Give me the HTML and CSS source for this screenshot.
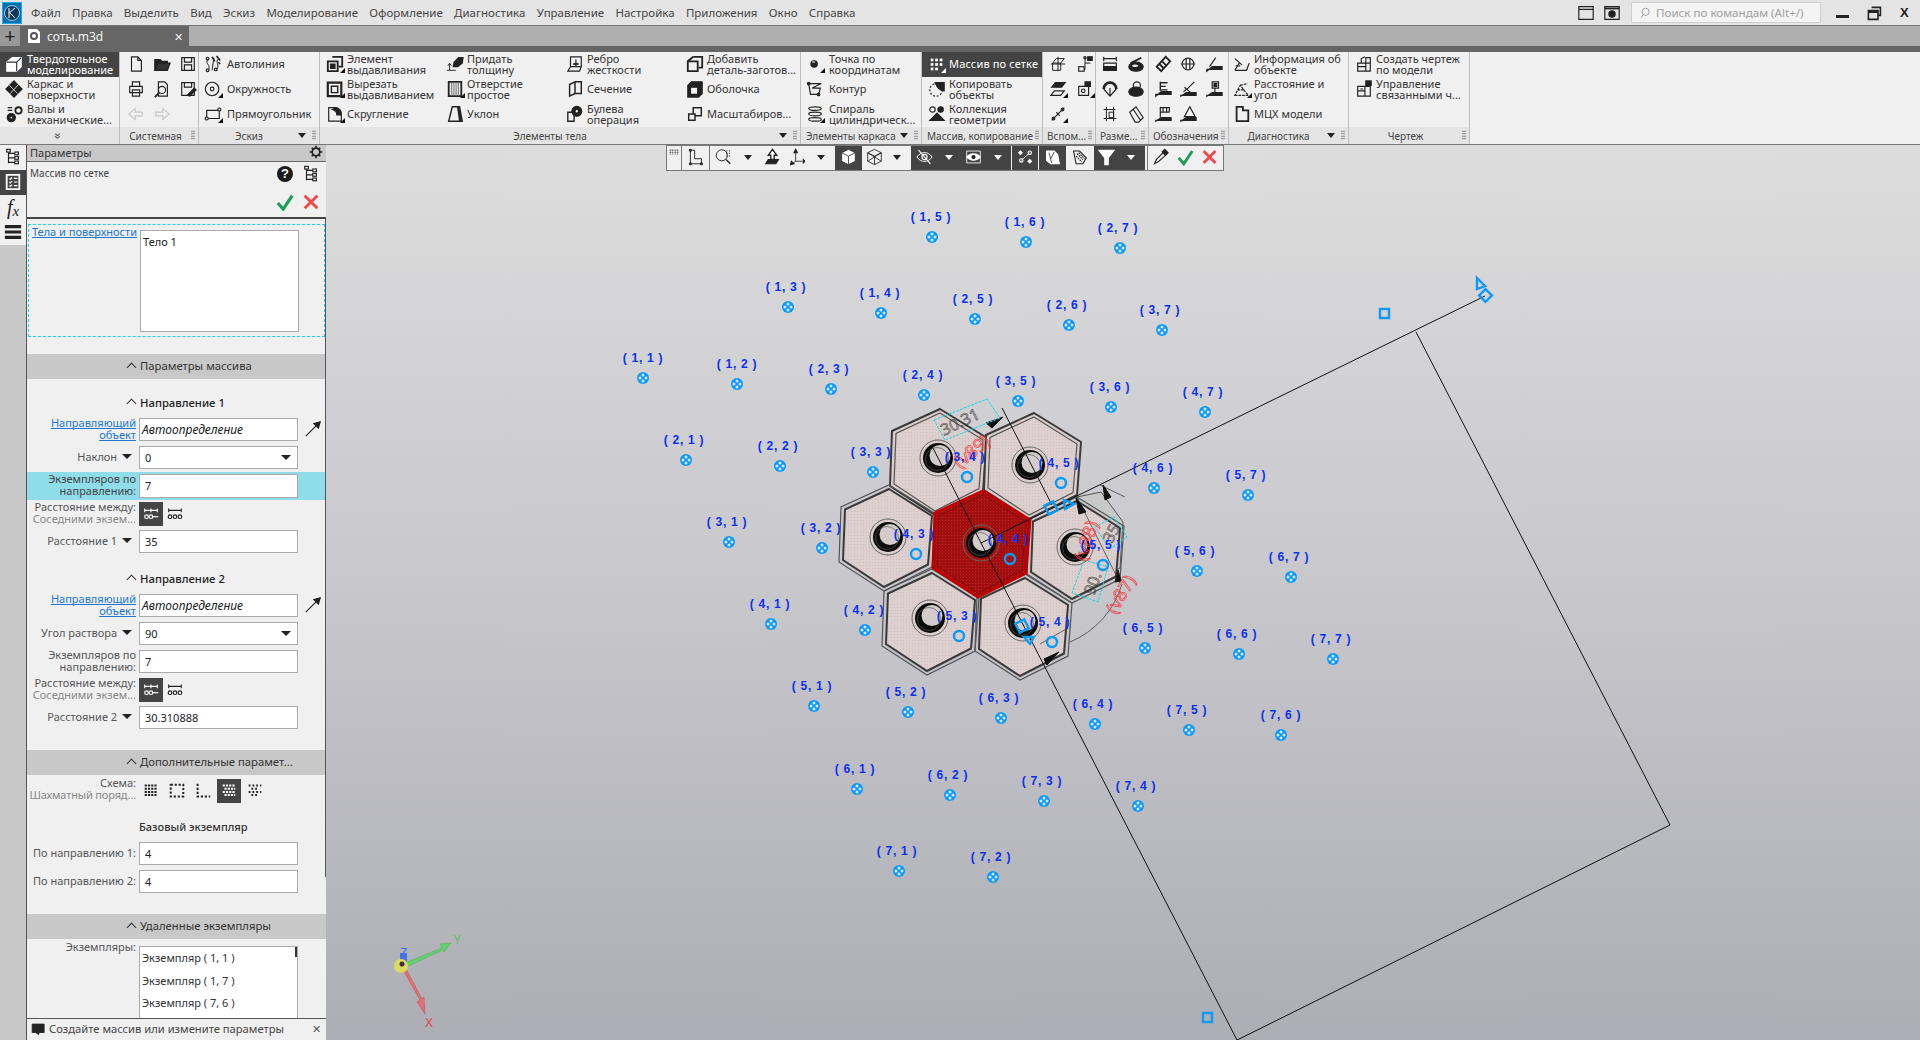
FILE: index.html
```html
<!DOCTYPE html>
<html lang="ru">
<head>
<meta charset="utf-8">
<title>соты.m3d</title>
<link rel="stylesheet" href="styles.css">
</head>
<body>
<svg class="defs" aria-hidden="true">
  <symbol id="i-solid" viewBox="0 0 20 20"><path d="M2 8 8 3h10v10l-5 5H2z" fill="#fff" stroke="#fff"/><path d="M2 8h11v10M13 8l5-5" stroke="#333"/></symbol>
  <symbol id="i-frame" viewBox="0 0 20 20"><path d="M10 1 19 10 10 19 1 10z" fill="#222"/><path d="M5 6l9 9M15 5l-9 10" stroke="#ddd" stroke-width="1"/></symbol>
  <symbol id="i-gears" viewBox="0 0 20 20"><circle cx="7" cy="14" r="4.5" fill="#222"/><circle cx="7" cy="14" r="1.6" fill="#fff"/><circle cx="15" cy="6" r="3.5" fill="none" stroke="#222" stroke-width="2"/><path d="M3 3h5M3 6h5" stroke="#222"/></symbol>
  <symbol id="i-doc" viewBox="0 0 20 20"><path d="M5 2h7l4 4v12H5zM12 2v4h4"/></symbol>
  <symbol id="i-folder" viewBox="0 0 20 20"><path d="M2 5h6l2 2h6v2H6l-4 8z" fill="#222"/><path d="M6 9h13l-3 8H2z" fill="#333"/></symbol>
  <symbol id="i-save" viewBox="0 0 20 20"><path d="M3 3h14v14H3zM6 3v5h8V3M6 17v-6h8v6"/></symbol>
  <symbol id="i-print" viewBox="0 0 20 20"><path d="M6 2h8v5H6zM3 7h14v7H3zM6 11h8v7H6z"/></symbol>
  <symbol id="i-prev" viewBox="0 0 20 20"><path d="M6 2h7l3 3v13H6z"/><circle cx="10" cy="11" r="4"/><path d="M7 14l-5 5" stroke-width="2"/></symbol>
  <symbol id="i-saveas" viewBox="0 0 20 20"><path d="M3 3h14v14H3zM6 3v5h8V3"/><path d="M9 17l8-8 2 2-7 7z" fill="#222"/></symbol>
  <symbol id="i-undo" viewBox="0 0 20 20"><path d="M9 4 2 10l7 6v-4h8V8H9z" stroke="#c8c8c8"/></symbol>
  <symbol id="i-redo" viewBox="0 0 20 20"><path d="M11 4l7 6-7 6v-4H3V8h8z" stroke="#c8c8c8"/></symbol>
  <symbol id="i-auto" viewBox="0 0 20 20"><path d="M4 5c-3 5 4 6 1 12M11 3l-2 14M16 4c-4 4 2 7-2 12" stroke-width="1.100"/><circle cx="4" cy="17" r="1.500"/><circle cx="13" cy="16" r="1.500"/><circle cx="4" cy="4" r="1.500"/><path d="M9 2l3 5M14 1l4 5M16 8l2 2" stroke-width="1.800"/></symbol>
  <symbol id="i-circ" viewBox="0 0 20 20"><circle cx="9" cy="10" r="7.5"/><circle cx="9" cy="10" r="2"/></symbol>
  <symbol id="i-rect" viewBox="0 0 20 20"><path d="M3 6h14v9H3z"/><circle cx="17" cy="5" r="1.7" fill="#f0f0f0"/><circle cx="3" cy="15" r="1.7" fill="#f0f0f0"/></symbol>
  <symbol id="i-ext" viewBox="0 0 20 20"><path d="M7 2h11v11h-4" stroke-width="2"/><path d="M2 7h11v11H2z" stroke-width="2"/><path d="M5 10h5v5H5z" fill="#222"/></symbol>
  <symbol id="i-cut" viewBox="0 0 20 20"><path d="M2 3h15v15H2z" stroke-width="2.4"/><path d="M6 7h7v7H6z" stroke-width="1.6"/></symbol>
  <symbol id="i-fil" viewBox="0 0 20 20"><path d="M3 18V3h7c5 0 7 4 7 8v7z"/><path d="M11 3c5 1 6 4 6 8l-5 0c0-3-1-5-5-6z" fill="#222"/></symbol>
  <symbol id="i-thick" viewBox="0 0 20 20"><path d="M9 8l5-5h5l-1 6-5 4H8z" fill="#222"/><path d="M4 17V10M2 12l2-3 2 3M1 17h10" stroke-width="1"/></symbol>
  <symbol id="i-hole" viewBox="0 0 20 20"><path d="M3 2h14v16H3z" stroke-width="2"/><path d="M6 3v14M8 3v14M10 3v14M12 3v14M14 3v14" stroke="#777" stroke-width="1"/></symbol>
  <symbol id="i-draft" viewBox="0 0 20 20"><path d="M7 2h8l3 16H3z" stroke-width="1.6"/><path d="M14 3l3 14h-2l-2-14z" fill="#222"/></symbol>
  <symbol id="i-rib" viewBox="0 0 20 20"><path d="M5 2h12v11H5zM5 13l-3 5h13l2-5M11 5v8"/><path d="M8 10h6" stroke-width="2"/></symbol>
  <symbol id="i-sect" viewBox="0 0 20 20"><path d="M4 5l6-3v13l-6 3zM10 2h7v13h-7" stroke-width="1.6"/></symbol>
  <symbol id="i-bool" viewBox="0 0 20 20"><path d="M2 8h7v10H2z" stroke-width="1.5"/><circle cx="12" cy="7" r="5.5" fill="#222"/><circle cx="12" cy="7" r="2" fill="#f0f0f0"/></symbol>
  <symbol id="i-add" viewBox="0 0 20 20"><path d="M8 2h10v12h-4" stroke-width="2"/><path d="M2 7h11v11H2z" stroke-width="2" fill="#f0f0f0"/><path d="M2 7l6-5" stroke-width="2"/></symbol>
  <symbol id="i-shell" viewBox="0 0 20 20"><path d="M2 6l4-4h12v13l-4 4H2z" fill="#222"/><path d="M5 8h8v8H5z" fill="#f0f0f0"/></symbol>
  <symbol id="i-scale" viewBox="0 0 20 20"><path d="M8 3h9v9H8z" stroke-width="1.6"/><path d="M3 10h7v7H3z" stroke-width="1.6" fill="#f0f0f0"/></symbol>
  <symbol id="i-pt" viewBox="0 0 20 20"><circle cx="9" cy="10" r="3.5" fill="#222"/><path d="M7 8a3 3 0 0 1 3 0" stroke="#f0f0f0"/></symbol>
  <symbol id="i-cont" viewBox="0 0 20 20"><path d="M3 4h14l-10 5h9l-2 7H5z"/><circle cx="3" cy="4" r="1.4"/><circle cx="14" cy="16" r="1.4"/></symbol>
  <symbol id="i-spir" viewBox="0 0 20 20"><ellipse cx="10" cy="4" rx="7" ry="2"/><ellipse cx="10" cy="10" rx="7" ry="2"/><ellipse cx="10" cy="16" rx="7" ry="2"/></symbol>
  <symbol id="i-grid" viewBox="0 0 20 20"><g fill="#fff" stroke="none"><rect x="3" y="4" width="3" height="3"/><rect x="8" y="4" width="3" height="3"/><rect x="13" y="4" width="3" height="3"/><rect x="3" y="9" width="3" height="3"/><rect x="8" y="9" width="3" height="3"/><rect x="13" y="9" width="3" height="3"/><rect x="3" y="14" width="3" height="3"/><rect x="8" y="14" width="3" height="3"/></g></symbol>
  <symbol id="i-copy" viewBox="0 0 20 20"><circle cx="9" cy="11" r="7" stroke-dasharray="2 2"/><path d="M8 3h10v9c-4 0-8-4-10-9z" fill="#222"/></symbol>
  <symbol id="i-coll" viewBox="0 0 20 20"><circle cx="5" cy="5" r="3"/><circle cx="14" cy="5" r="3" fill="#222"/><path d="M2 17l8-8 8 8z" fill="#222"/></symbol>
  <symbol id="i-a1" viewBox="0 0 20 20"><path d="M4 9h9l4-5M13 9v8H4V9l4-5h9M10 2v16M2 10h16" stroke-width="1.100"/></symbol>
  <symbol id="i-a2" viewBox="0 0 20 20"><path d="M10 2v14M10 9h6M3 16h7" stroke-width="1.100"/><rect x="13" y="2" width="5" height="4" fill="#222"/><rect x="3" y="13" width="6" height="5" fill="#f0f0f0"/><circle cx="10" cy="3" r="1.3"/></symbol>
  <symbol id="i-a3" viewBox="0 0 20 20"><path d="M7 3h11l-4 5H3z" fill="#222"/><path d="M6 12h11l-4 5H2z"/></symbol>
  <symbol id="i-a4" viewBox="0 0 20 20"><path d="M3 7h11v10H3z"/><circle cx="8" cy="12" r="2"/><path d="M10 2h6v5h-6z" fill="#222"/></symbol>
  <symbol id="i-a5" viewBox="0 0 20 20"><path d="M3 17 17 3M8 8l4 4"/><circle cx="5" cy="15" r="1.5"/><circle cx="15" cy="5" r="1.5"/></symbol>
  <symbol id="i-d1" viewBox="0 0 20 20"><path d="M3 4h14M3 2v5M17 2v5M3 9h14v8H3z"/><path d="M3 13h14v4H3z" fill="#222"/></symbol>
  <symbol id="i-d2" viewBox="0 0 20 20"><ellipse cx="10" cy="13" rx="8" ry="5" fill="#222"/><ellipse cx="9" cy="12" rx="4" ry="2" fill="#f0f0f0"/><path d="M4 9 16 3" stroke-width="2"/></symbol>
  <symbol id="i-d3" viewBox="0 0 20 20"><path d="M3 10a7 7 0 0 1 14 0" stroke-width="3"/><path d="M3 10l7 8 7-8M10 9v9"/></symbol>
  <symbol id="i-d4" viewBox="0 0 20 20"><ellipse cx="10" cy="13" rx="8" ry="5" fill="#222"/><circle cx="11" cy="6" r="4"/></symbol>
  <symbol id="i-d5" viewBox="0 0 20 20"><path d="M3 5h13M6 2v16M14 2v16M3 15h14M9 8h5v6H9z" stroke-width="1.100"/></symbol>
  <symbol id="i-d6" viewBox="0 0 20 20"><path d="M3 8 10 2l8 12-5 5H9zM7 5l8 12" stroke-width="1.300"/></symbol>
  <symbol id="i-o1" viewBox="0 0 20 20"><path d="M3 13 13 2l5 5L8 18z" stroke-width="2"/><path d="M6 10l5 5M9 7l5 5" stroke-width="2"/></symbol>
  <symbol id="i-o2" viewBox="0 0 20 20"><circle cx="10" cy="10" r="6.5"/><path d="M2 10h16M8 4v12M12 4v12"/></symbol>
  <symbol id="i-o3" viewBox="0 0 20 20"><path d="M2 18 8 13h11v3H2z" fill="#222"/><path d="M5 13l7-10"/></symbol>
  <symbol id="i-o4" viewBox="0 0 20 20"><path d="M2 18 8 13h11v3H2z" fill="#222"/><path d="M7 12V2M7 3h8M7 7h6M7 11h8" stroke-width="1.500"/></symbol>
  <symbol id="i-o5" viewBox="0 0 20 20"><path d="M2 18 8 14h11v3H2z" fill="#222"/><path d="M5 13l5-4 7-7M6 8l7 6"/></symbol>
  <symbol id="i-o6" viewBox="0 0 20 20"><path d="M2 18 8 14h11v3H2z" fill="#222"/><path d="M8 2h7v7H8zM11 9v5"/><path d="M10 4h3v3h-3z" fill="#222"/></symbol>
  <symbol id="i-o7" viewBox="0 0 20 20"><path d="M2 18 8 14h11v3H2z" fill="#222"/><path d="M7 14V3h10v5M7 8h10M10 3v5M14 3v5" stroke-width="1.300"/></symbol>
  <symbol id="i-o8" viewBox="0 0 20 20"><path d="M2 18 8 14h11v3H2z" fill="#222"/><path d="M12 2l-6 11h12z" stroke-width="1.300"/></symbol>
  <symbol id="i-dg1" viewBox="0 0 20 20"><path d="M2 4l8 7M2 17h13l3-8M2 17 7 9"/><path d="M3 12h5" stroke-dasharray="2 1"/></symbol>
  <symbol id="i-dg2" viewBox="0 0 20 20"><path d="M2 17h15l-9-11-6 11zM8 6l8-2M5 11h8" stroke-dasharray="3 1"/></symbol>
  <symbol id="i-dg3" viewBox="0 0 20 20"><path d="M4 2h7v4h6v12H4z" stroke-width="2"/></symbol>
  <symbol id="i-c1" viewBox="0 0 20 20"><path d="M3 9h14v9H3zM3 13h9M12 9v9M7 9V4l4-2M12 3h5v6h-5z"/></symbol>
  <symbol id="i-c2" viewBox="0 0 20 20"><path d="M3 7h14v11H3zM3 12h8M11 7v11M6 10h3"/><rect x="12" y="1" width="6" height="5" fill="#222"/></symbol>
  <symbol id="i-tree" viewBox="0 0 20 20"><path d="M5 3v14M5 6h7M5 11h7M5 16h7"/><rect x="3" y="1.500" width="4" height="3" fill="#fff"/><rect x="12" y="4.500" width="4" height="3" fill="#fff"/><rect x="12" y="9.500" width="4" height="3" fill="#fff"/><rect x="12" y="14.500" width="4" height="3" fill="#fff"/></symbol>
  <symbol id="i-list" viewBox="0 0 20 20"><path d="M3 2h14v16H3z" stroke-width="2" stroke="#fff"/><path d="M6 6l1 1 2-2M6 10l1 1 2-2M6 14l1 1 2-2M11 6h4M11 10h4M11 14h4" stroke="#fff"/></symbol>
  <symbol id="i-bars" viewBox="0 0 20 20"><path d="M1 4h18M1 10h18M1 16h18" stroke-width="3.400" stroke="#222"/></symbol>
  <symbol id="i-gear" viewBox="0 0 20 20"><circle cx="10" cy="10" r="5.500" stroke-width="2.400"/><path d="M10 1v4M10 15v4M1 10h4M15 10h4M4 4l3 3M13 13l3 3M16 4l-3 3M7 13l-3 3" stroke-width="2.400"/></symbol>
  <symbol id="i-ok" viewBox="0 0 20 20"><path d="M2 11 8 18 18 3" stroke="#1c9c5c" stroke-width="3.400"/></symbol>
  <symbol id="i-no" viewBox="0 0 20 20"><path d="M3 3l14 14M17 3 3 17" stroke="#f04848" stroke-width="3.200"/></symbol>
  <symbol id="i-arr" viewBox="0 0 20 20"><path d="M2 18 17 3"/><path d="M18 2l-2 7-5-5z" fill="#222"/></symbol>
  <symbol id="i-d-a" viewBox="0 0 20 20"><path d="M3 6h14M3 4v4M17 4v4M10 4v4" stroke-width="1.200"/><circle cx="5" cy="13" r="2"/><circle cx="10" cy="13" r="2"/><path d="M12 13h6"/></symbol>
  <symbol id="i-d-b" viewBox="0 0 20 20"><path d="M3 6h14M3 4v4M17 4v4" stroke-width="1.200"/><circle cx="4.500" cy="13" r="2"/><circle cx="10" cy="13" r="2"/><circle cx="15.500" cy="13" r="2"/></symbol>
  <symbol id="i-sc1" viewBox="0 0 20 20"><path d="M3 4h14M3 7.500h14M3 11h14M3 14.500h14" stroke-width="2.200" stroke-dasharray="2.400 1.200"/></symbol>
  <symbol id="i-sc2" viewBox="0 0 20 20"><path d="M3 3h14v13H3z" stroke-width="2.200" stroke-dasharray="2.400 2"/></symbol>
  <symbol id="i-sc3" viewBox="0 0 20 20"><path d="M4 2v14h14" stroke-width="2.200" stroke-dasharray="2.400 2"/></symbol>
  <symbol id="i-sc4" viewBox="0 0 20 20"><path d="M3 4h14M5 7.500h12M3 11h14M5 14.500h12" stroke-width="2.200" stroke-dasharray="2.400 1.200" stroke="#fff"/></symbol>
  <symbol id="i-sc5" viewBox="0 0 20 20"><path d="M3 4h14M6 7.500h8M3 11h14M6 14.500h8" stroke-width="2.200" stroke-dasharray="2 2.200"/></symbol>
  <symbol id="i-tb-l" viewBox="0 0 20 20"><path d="M4 2h5v10h8v6H4z" stroke-width="1.100"/><circle cx="4" cy="2" r="1.200"/><circle cx="4" cy="18" r="1.200"/><circle cx="17" cy="18" r="1.200"/></symbol>
  <symbol id="i-tb-z" viewBox="0 0 20 20"><circle cx="8" cy="8" r="6.500" stroke-width="1.100"/><path d="M13 13l5 5" stroke-width="1.600"/><path d="M14 2v9M17 2v9" stroke-dasharray="1.500 1.500" stroke-width="1"/></symbol>
  <symbol id="i-tb-u" viewBox="0 0 20 20"><path d="M10 1 15 8h-3v5H8V8H5z" fill="#fff" stroke-width="1.600"/><path d="M5 13h12l-3 5H2z" fill="#222"/></symbol>
  <symbol id="i-tb-a" viewBox="0 0 20 20"><path d="M9 4v11H17M9 15l-6 4" stroke-width="1"/><path d="M9 1 7 5h4zM18 13v4l2-2zM3 19l1-4 3 3z" fill="#222"/></symbol>
  <symbol id="i-tb-c" viewBox="0 0 20 20"><path d="M10 1l8 4v10l-8 4-8-4V5z" fill="#fff" stroke="#333" stroke-width="1"/><path d="M2 5l8 4 8-4M10 9v10" stroke="#333" stroke-width="1"/></symbol>
  <symbol id="i-tb-w" viewBox="0 0 20 20"><path d="M10 1l8 4v10l-8 4-8-4V5zM2 5l8 4 8-4M10 9v10M2 15l16-10M18 15 2 5" stroke-width="1"/></symbol>
  <symbol id="i-tb-e1" viewBox="0 0 20 20"><path d="M1 10c5-7 13-7 18 0-5 7-13 7-18 0z" stroke="#fff" stroke-width="1.100"/><circle cx="10" cy="10" r="3" stroke="#fff" stroke-width="1.400"/><path d="M3 2 17 18" stroke="#fff" stroke-width="1.300"/></symbol>
  <symbol id="i-tb-e2" viewBox="0 0 20 20"><path d="M2 3h16v14H2z" stroke="#fff" stroke-width="1"/><path d="M2 10c4-5 12-5 16 0-4 5-12 5-16 0z" fill="#fff" stroke="#fff"/><circle cx="10" cy="10" r="2.500" fill="#222" stroke="none"/></symbol>
  <symbol id="i-tb-n" viewBox="0 0 20 20"><path d="M5 14l10-9" stroke="#fff" stroke-width="1"/><g fill="#fff" stroke="none"><path d="M4 2 7 5 4 8 1 5zM15 12l3 3-3 3-3-3z"/></g><circle cx="5" cy="14" r="2" stroke="#fff"/><circle cx="15" cy="5" r="2" stroke="#fff"/></symbol>
  <symbol id="i-tb-h1" viewBox="0 0 20 20"><path d="M3 3h9l4 4 2 11H8L3 14z" fill="#fff" stroke="#fff"/><path d="M6 5l3 12M12 4l-4 8" stroke="#333" stroke-width="1"/></symbol>
  <symbol id="i-tb-h2" viewBox="0 0 20 20"><path d="M3 3h7l8 8-4 7H6z" stroke-width="1.300"/><path d="M7 6l7 7M9 5l7 7M6 9l7 7" stroke-dasharray="2 1"/></symbol>
  <symbol id="i-tb-f" viewBox="0 0 20 20"><path d="M1 2h18l-7 9v8H8v-8z" fill="#fff" stroke="#fff"/></symbol>
  <symbol id="i-tb-p" viewBox="0 0 20 20"><path d="M3 18 5 13 13 5l3 3-8 7z" stroke-width="1.300"/><path d="M12 4l3-3 4 4-3 3z" fill="#222"/></symbol>
  <symbol id="i-win" viewBox="0 0 20 20"><path d="M2 3h16v14H2zM2 6h16"/></symbol>
  <symbol id="i-wing" viewBox="0 0 20 20"><path d="M2 3h16v14H2z"/><path d="M2 5h16" stroke-width="2"/><circle cx="10" cy="11" r="3.500" fill="#222"/></symbol>
  <symbol id="i-note" viewBox="0 0 20 20"><path d="M1 3h17v12h-7l-1 3-4-3H1z" fill="#222"/></symbol>
</svg>

<header class="menubar">
  <div class="logo"><svg viewBox="0 0 20 22"><rect x="0.500" y="0.500" width="19" height="21" fill="#0c6ea8" stroke="#18a8ee"/><circle cx="10" cy="11" r="7.500" fill="#123a60" stroke="#8fd0f0"/><path d="M7 6v10M7 11l6-5M8 11l5 5" stroke="#fff" fill="none"/></svg></div>
  <nav class="menu">
    <span>Файл</span><span>Правка</span><span>Выделить</span><span>Вид</span><span>Эскиз</span><span>Моделирование</span><span>Оформление</span><span>Диагностика</span><span>Управление</span><span>Настройка</span><span>Приложения</span><span>Окно</span><span>Справка</span>
  </nav>
  <div class="win-tools">
    <svg class="ic wt"><use href="#i-win"/></svg>
    <svg class="ic wt"><use href="#i-wing"/></svg>
    <div class="search"><svg class="ic s-ic" viewBox="0 0 20 20"><circle cx="11" cy="8" r="6"/><path d="M7 13l-4 5"/></svg><span>Поиск по командам (Alt+/)</span></div>
    <div class="wbtns">
      <span class="wmin"></span>
      <svg class="ic wres" viewBox="0 0 20 20"><path d="M7 3h11v10h-3M3 7h12v11H3zM3 7V9h12V7" stroke-width="2"/></svg>
      <span class="wclose">X</span>
    </div>
  </div>
</header>

<div class="tabbar">
  <div class="tab-add">+</div>
  <div class="tab">
    <svg class="tab-ic" viewBox="0 0 16 16"><path d="M2 1h9l3 3v11H2z" fill="#fff"/><circle cx="8" cy="8" r="4" fill="#555"/><circle cx="8" cy="8" r="2" fill="#fff"/></svg>
    <span class="tab-t">соты.m3d</span>
    <span class="tab-x">✕</span>
  </div>
</div>
<div class="strip"></div>

<section class="ribbon">
  <div class="sec s-nav">
    <div class="g3 one">
      <div class="rb act"><svg class="ic"><use href="#i-solid"/></svg><span>Твердотельное<br>моделирование</span></div>
      <div class="rb"><svg class="ic"><use href="#i-frame"/></svg><span>Каркас и<br>поверхности</span></div>
      <div class="rb"><svg class="ic"><use href="#i-gears"/></svg><span>Валы и<br>механические...</span></div>
    </div>
    <div class="foot center"><span class="chev">»</span></div>
  </div>
  <div class="sec s-sys">
    <div class="g3 icons c3">
      <svg class="ic"><use href="#i-doc"/></svg><svg class="ic"><use href="#i-folder"/></svg><svg class="ic"><use href="#i-save"/></svg>
      <svg class="ic"><use href="#i-print"/></svg><svg class="ic"><use href="#i-prev"/></svg><svg class="ic"><use href="#i-saveas"/></svg>
      <svg class="ic"><use href="#i-undo"/></svg><svg class="ic"><use href="#i-redo"/></svg>
    </div>
    <div class="foot"><b>Системная</b><i class="grip"></i></div>
  </div>
  <div class="sec s-sk">
    <div class="g3 one">
      <div class="rb"><svg class="ic"><use href="#i-auto"/></svg><span>Автолиния</span></div>
      <div class="rb cr"><svg class="ic"><use href="#i-circ"/></svg><span>Окружность</span></div>
      <div class="rb cr"><svg class="ic"><use href="#i-rect"/></svg><span>Прямоугольник</span></div>
    </div>
    <div class="foot withdn"><b>Эскиз</b><i class="dn"></i><i class="grip"></i></div>
  </div>
  <div class="sec s-body">
    <div class="g3 body4">
      <div class="rb cr"><svg class="ic"><use href="#i-ext"/></svg><span>Элемент<br>выдавливания</span></div>
      <div class="rb cr"><svg class="ic"><use href="#i-cut"/></svg><span>Вырезать<br>выдавливанием</span></div>
      <div class="rb cr"><svg class="ic"><use href="#i-fil"/></svg><span>Скругление</span></div>
      <div class="rb"><svg class="ic"><use href="#i-thick"/></svg><span>Придать<br>толщину</span></div>
      <div class="rb cr"><svg class="ic"><use href="#i-hole"/></svg><span>Отверстие<br>простое</span></div>
      <div class="rb"><svg class="ic"><use href="#i-draft"/></svg><span>Уклон</span></div>
      <div class="rb"><svg class="ic"><use href="#i-rib"/></svg><span>Ребро<br>жесткости</span></div>
      <div class="rb"><svg class="ic"><use href="#i-sect"/></svg><span>Сечение</span></div>
      <div class="rb"><svg class="ic"><use href="#i-bool"/></svg><span>Булева<br>операция</span></div>
      <div class="rb"><svg class="ic"><use href="#i-add"/></svg><span>Добавить<br>деталь-заготов...</span></div>
      <div class="rb"><svg class="ic"><use href="#i-shell"/></svg><span>Оболочка</span></div>
      <div class="rb"><svg class="ic"><use href="#i-scale"/></svg><span>Масштабиров...</span></div>
    </div>
    <div class="foot withdn"><b>Элементы тела</b><i class="dn"></i><i class="grip"></i></div>
  </div>
  <div class="sec s-wire">
    <div class="g3 one">
      <div class="rb cr"><svg class="ic"><use href="#i-pt"/></svg><span>Точка по<br>координатам</span></div>
      <div class="rb"><svg class="ic"><use href="#i-cont"/></svg><span>Контур</span></div>
      <div class="rb cr"><svg class="ic"><use href="#i-spir"/></svg><span>Спираль<br>цилиндрическ...</span></div>
    </div>
    <div class="foot"><b>Элементы каркаса</b><i class="dn"></i><i class="grip"></i></div>
  </div>
  <div class="sec s-arr">
    <div class="g3 one">
      <div class="rb act cr crw"><svg class="ic"><use href="#i-grid"/></svg><span>Массив по сетке</span></div>
      <div class="rb"><svg class="ic"><use href="#i-copy"/></svg><span>Копировать<br>объекты</span></div>
      <div class="rb"><svg class="ic"><use href="#i-coll"/></svg><span>Коллекция<br>геометрии</span></div>
    </div>
    <div class="foot"><b>Массив, копирование</b><i class="grip"></i></div>
  </div>
  <div class="sec s-aux">
    <div class="g3 icons c2">
      <svg class="ic"><use href="#i-a1"/></svg><svg class="ic"><use href="#i-a2"/></svg>
      <span class="ib cr"><svg class="ic"><use href="#i-a3"/></svg></span><span class="ib cr"><svg class="ic"><use href="#i-a4"/></svg></span>
      <span class="ib cr"><svg class="ic"><use href="#i-a5"/></svg></span>
    </div>
    <div class="foot"><b>Вспом...</b><i class="grip"></i></div>
  </div>
  <div class="sec s-dim">
    <div class="g3 icons c2b">
      <svg class="ic"><use href="#i-d1"/></svg><svg class="ic"><use href="#i-d2"/></svg>
      <svg class="ic"><use href="#i-d3"/></svg><svg class="ic"><use href="#i-d4"/></svg>
      <svg class="ic"><use href="#i-d5"/></svg><svg class="ic"><use href="#i-d6"/></svg>
    </div>
    <div class="foot"><b>Разме...</b><i class="grip"></i></div>
  </div>
  <div class="sec s-ann">
    <div class="g3 icons c3b">
      <svg class="ic"><use href="#i-o1"/></svg><svg class="ic"><use href="#i-o2"/></svg><svg class="ic"><use href="#i-o3"/></svg>
      <svg class="ic"><use href="#i-o4"/></svg><svg class="ic"><use href="#i-o5"/></svg><svg class="ic"><use href="#i-o6"/></svg>
      <svg class="ic"><use href="#i-o7"/></svg><svg class="ic"><use href="#i-o8"/></svg>
    </div>
    <div class="foot"><b>Обозначения</b><i class="grip"></i></div>
  </div>
  <div class="sec s-diag">
    <div class="g3 one">
      <div class="rb"><svg class="ic"><use href="#i-dg1"/></svg><span>Информация об<br>объекте</span></div>
      <div class="rb cr"><svg class="ic"><use href="#i-dg2"/></svg><span>Расстояние и<br>угол</span></div>
      <div class="rb"><svg class="ic"><use href="#i-dg3"/></svg><span>МЦХ модели</span></div>
    </div>
    <div class="foot withdn"><b>Диагностика</b><i class="dn"></i><i class="grip"></i></div>
  </div>
  <div class="sec s-drw">
    <div class="g3 one">
      <div class="rb"><svg class="ic"><use href="#i-c1"/></svg><span>Создать чертеж<br>по модели</span></div>
      <div class="rb"><svg class="ic"><use href="#i-c2"/></svg><span>Управление<br>связанными ч...</span></div>
    </div>
    <div class="foot"><b>Чертеж</b><i class="grip"></i></div>
  </div>
</section>

<main class="workspace">
  <aside class="rail">
    <div class="rail-i"><svg class="ic"><use href="#i-tree"/></svg></div>
    <div class="rail-i on"><svg class="ic"><use href="#i-list"/></svg></div>
    <div class="rail-i fx"><i>f</i><i class="fxx">x</i></div>
    <div class="rail-i"><svg class="ic"><use href="#i-bars"/></svg></div>
  </aside>

  <aside class="panel">
    <div class="p-head"><span>Параметры</span><svg class="ic p-gear"><use href="#i-gear"/></svg></div>
    <div class="p-title">
      <div class="p-name">Массив по сетке</div>
      <div class="p-tools">
        <span class="help">?</span><svg class="ic"><use href="#i-tree"/></svg>
        <svg class="ic"><use href="#i-ok"/></svg><svg class="ic"><use href="#i-no"/></svg>
      </div>
    </div>
    <div class="p-body">
      <div class="bodies">
        <a class="lnk bodies-l">Тела и поверхности</a>
        <div class="area">Тело 1</div>
      </div>

      <div class="sect-h"><i class="up"></i>Параметры массива</div>

      <div class="grp-h"><i class="up"></i>Направление 1</div>
      <div class="fr"><a class="lab lnk">Направляющий<br>объект</a><div class="inp it">Автоопределение</div><svg class="ic fr-a"><use href="#i-arr"/></svg></div>
      <div class="fr"><div class="lab">Наклон <i class="dn lab-dn"></i></div><div class="inp sel">0<i class="dn"></i></div></div>
      <div class="fr hl"><div class="lab">Экземпляров по<br>направлению:</div><div class="inp">7</div></div>
      <div class="fr"><div class="lab">Расстояние между:<br><em>Соседними экзем...</em></div><div class="tgl"><span class="t on"><svg class="ic"><use href="#i-d-a"/></svg></span><span class="t"><svg class="ic"><use href="#i-d-b"/></svg></span></div></div>
      <div class="fr"><div class="lab">Расстояние 1 <i class="dn lab-dn"></i></div><div class="inp">35</div></div>

      <div class="grp-h g2"><i class="up"></i>Направление 2</div>
      <div class="fr"><a class="lab lnk">Направляющий<br>объект</a><div class="inp it">Автоопределение</div><svg class="ic fr-a"><use href="#i-arr"/></svg></div>
      <div class="fr"><div class="lab">Угол раствора <i class="dn lab-dn"></i></div><div class="inp sel">90<i class="dn"></i></div></div>
      <div class="fr"><div class="lab">Экземпляров по<br>направлению:</div><div class="inp">7</div></div>
      <div class="fr"><div class="lab">Расстояние между:<br><em>Соседними экзем...</em></div><div class="tgl"><span class="t on"><svg class="ic"><use href="#i-d-a"/></svg></span><span class="t"><svg class="ic"><use href="#i-d-b"/></svg></span></div></div>
      <div class="fr"><div class="lab">Расстояние 2 <i class="dn lab-dn"></i></div><div class="inp">30.310888</div></div>

      <div class="sect-h s2"><i class="up"></i>Дополнительные парамет...</div>
      <div class="fr fr-sc"><div class="lab">Схема:<br><em class="narrow">Шахматный поряд...</em></div><div class="tgl sc">
        <span class="t"><svg class="ic"><use href="#i-sc1"/></svg></span><span class="t"><svg class="ic"><use href="#i-sc2"/></svg></span><span class="t"><svg class="ic"><use href="#i-sc3"/></svg></span><span class="t on"><svg class="ic"><use href="#i-sc4"/></svg></span><span class="t"><svg class="ic"><use href="#i-sc5"/></svg></span>
      </div></div>
      <div class="base-h">Базовый экземпляр</div>
      <div class="fr"><div class="lab">По направлению 1:</div><div class="inp">4</div></div>
      <div class="fr"><div class="lab">По направлению 2:</div><div class="inp">4</div></div>

      <div class="sect-h s3"><i class="up"></i>Удаленные экземпляры</div>
      <div class="fr fr-list"><div class="lab">Экземпляры:</div>
        <div class="list"><i class="thumb"></i><div>Экземпляр ( 1, 1 )</div><div>Экземпляр ( 1, 7 )</div><div>Экземпляр ( 7, 6 )</div></div>
      </div>
      <i class="p-line"></i>
    </div>
    <div class="status"><svg class="ic st-ic"><use href="#i-note"/></svg><span>Создайте массив или измените параметры</span><span class="st-x">✕</span></div>
  </aside>

  <div class="canvas">
    <div class="floatbar">
      <div class="seg grip-s"><i class="dots"></i></div>
      <div class="seg s28"><span class="ti"><svg class="ic"><use href="#i-tb-l"/></svg></span></div>
      <div class="seg"><span class="ti"><svg class="ic"><use href="#i-tb-z"/></svg></span><span class="ti"><i class="dn"></i></span><span class="ti"><svg class="ic"><use href="#i-tb-u"/></svg></span><span class="ti"><svg class="ic"><use href="#i-tb-a"/></svg></span><span class="ti"><i class="dn"></i></span></div>
      <div class="seg dk"><span class="ti"><svg class="ic"><use href="#i-tb-c"/></svg></span></div>
      <div class="seg noline s48"><span class="ti"><svg class="ic"><use href="#i-tb-w"/></svg></span><span class="ti"><i class="dn"></i></span></div>
      <div class="seg dk"><span class="ti"><svg class="ic"><use href="#i-tb-e1"/></svg></span><span class="ti"><i class="dn w"></i></span><span class="ti"><svg class="ic"><use href="#i-tb-e2"/></svg></span><span class="ti"><i class="dn w"></i></span></div>
      <div class="seg dk"><span class="ti"><svg class="ic"><use href="#i-tb-n"/></svg></span></div>
      <div class="seg dk"><span class="ti"><svg class="ic"><use href="#i-tb-h1"/></svg></span></div>
      <div class="seg noline s28"><span class="ti"><svg class="ic"><use href="#i-tb-h2"/></svg></span></div>
      <div class="seg dk"><span class="ti"><svg class="ic"><use href="#i-tb-f"/></svg></span><span class="ti"><i class="dn w"></i></span></div>
      <div class="seg end"><span class="ti"><svg class="ic"><use href="#i-tb-p"/></svg></span><span class="ti"><svg class="ic"><use href="#i-ok"/></svg></span><span class="ti"><svg class="ic"><use href="#i-no"/></svg></span></div>
    </div>

    <svg class="scene" viewBox="326 145 1593 895" xmlns="http://www.w3.org/2000/svg">
      <defs>
        <pattern id="pk" width="3" height="3" patternUnits="userSpaceOnUse"><rect width="3" height="3" fill="#dbd0cf"/><rect width="1" height="1" fill="#d6bdb8"/></pattern>
        <pattern id="rd" width="3" height="3" patternUnits="userSpaceOnUse"><rect width="3" height="3" fill="#a01010"/><rect width="1" height="1" fill="#c82018"/></pattern>
        <polygon id="hx" points="2,-53 49,-24 45,29 -3,53 -48,24 -46,-31"/>
        <polygon id="hxi" points="2,-49 45,-22 41,26.500 -3,49 -44,22 -42,-28.500"/>
        <g id="hole"><circle r="18" fill="none" stroke="#666" stroke-width="1"/><circle r="15" fill="#0c0c0c"/><circle cx="2" cy="-2.500" r="10.500" fill="#d4cccb"/><circle cx="-1" cy="1" r="11.500" fill="none" stroke="#555" stroke-width=".7"/></g>
        <g id="m"><circle r="6" fill="#0e9af4"/><g fill="#cfe4ef"><circle cx="-3" r="1.500"/><circle cx="3" r="1.500"/><circle cy="-3" r="1.500"/><circle cy="3" r="1.500"/></g></g>
        <circle id="r" r="5" fill="none" stroke="#0e9af4" stroke-width="2.500"/>
      </defs>

      <g class="hex">
        <use href="#hx" x="938" y="462"/><use href="#hxi" x="938" y="462"/>
        <use href="#hx" x="1032" y="466"/><use href="#hxi" x="1032" y="466"/>
        <path class="hside" d="M1077 497l24 -5 22 30 -3 46 -20 10z"/>
        <use href="#hx" x="1075" y="550"/><use href="#hxi" x="1075" y="550"/>
        <use href="#hx" x="887" y="538"/><use href="#hxi" x="887" y="538"/>
        <use href="#hx" x="930" y="622"/><use href="#hxi" x="930" y="622"/>
        <use href="#hx" x="1023" y="627"/><use href="#hxi" x="1023" y="627"/>
      </g>
      <g class="hex red"><use href="#hx" x="981" y="544"/><use href="#hxi" x="981" y="544"/></g>
      <use href="#hole" x="938" y="458"/><use href="#hole" x="1030" y="465"/><use href="#hole" x="1075" y="547"/><use href="#hole" x="981" y="543"/><use href="#hole" x="888" y="537"/><use href="#hole" x="930" y="618"/><use href="#hole" x="1023" y="623"/>

      <g class="sk">
        <path d="M981 543 1485 296M1416 332 1670 825 1207 1055M981 543 1237 1040M933 448 981 543M1002 408 1052 505"/>
        <path class="thin" d="M1070 642a90 90 0 0 0 52 -58M1040 644 1068 628"/>
        <path class="thin" d="M1077 497 1120 583M1100 485 1125 497"/>
        <path class="a" d="M986 423 1003 417 992 428z"/>
        <path class="a" d="M1044 659 1059 652 1047 665z"/>
        <path class="a" d="M1103 485 1105 500 1111 497z"/>
        <path class="a" d="M1076 498 1086 512 1079 514z"/>
        <path class="a" d="M1118 570 1115 582 1121 581z"/>
      </g>
      <g class="dim">
        <path class="cy" d="M934 420 987 399 1000 418 945 440z"/>
        <text transform="translate(944 436) rotate(-26)">30.31</text>
        <path class="cy" d="M1095 527 1114 517 1127 537 1110 549z"/>
        <text transform="translate(1112 544) rotate(-62)">35</text>
        <path class="cy" d="M1084 560 1108 567 1098 602 1072 593z"/>
        <text transform="translate(1094 596) rotate(-70)">90.</text>
        <text class="rd" transform="translate(960 469) rotate(-39)">(v89)</text>
        <text class="rd" transform="translate(1116 615) rotate(-60)">(v87)</text>
        <text class="rd" transform="translate(1086 562) rotate(-72)">(v88)</text>
      </g>
      <g class="handle">
        <rect x="1380" y="309" width="9" height="9"/>
        <rect x="1203" y="1013" width="9" height="9"/>
        <rect x="1481" y="291" width="9" height="9" transform="rotate(45 1485.500 295.500)"/>
        <path d="M1477 278 1485 286 1477 289z"/>
        <rect x="1046" y="503" width="10" height="10" transform="rotate(-27 1051 508)"/>
        <path d="M1064 500 1074 504 1065 509z"/>
        <rect x="1017" y="621" width="10" height="10" transform="rotate(-27 1022 626)"/>
        <path d="M1024 637 1034 637 1030 644z"/>
      </g>

      <g class="pts">
        <use href="#m" x="643" y="378"/><text x="643" y="362">( 1, 1 )</text>
        <use href="#m" x="737" y="384"/><text x="737" y="368">( 1, 2 )</text>
        <use href="#m" x="788" y="307"/><text x="786" y="291">( 1, 3 )</text>
        <use href="#m" x="881" y="313"/><text x="880" y="297">( 1, 4 )</text>
        <use href="#m" x="932" y="237"/><text x="931" y="221">( 1, 5 )</text>
        <use href="#m" x="1026" y="242"/><text x="1025" y="226">( 1, 6 )</text>
        <use href="#m" x="686" y="460"/><text x="684" y="444">( 2, 1 )</text>
        <use href="#m" x="780" y="466"/><text x="778" y="450">( 2, 2 )</text>
        <use href="#m" x="831" y="389"/><text x="829" y="373">( 2, 3 )</text>
        <use href="#m" x="924" y="395"/><text x="923" y="379">( 2, 4 )</text>
        <use href="#m" x="975" y="319"/><text x="973" y="303">( 2, 5 )</text>
        <use href="#m" x="1069" y="325"/><text x="1067" y="309">( 2, 6 )</text>
        <use href="#m" x="1120" y="248"/><text x="1118" y="232">( 2, 7 )</text>
        <use href="#m" x="729" y="542"/><text x="727" y="526">( 3, 1 )</text>
        <use href="#m" x="822" y="548"/><text x="821" y="532">( 3, 2 )</text>
        <use href="#m" x="873" y="472"/><text x="871" y="456">( 3, 3 )</text>
        <use href="#r" x="967" y="477"/><text x="965" y="461">( 3, 4 )</text>
        <use href="#m" x="1018" y="401"/><text x="1016" y="385">( 3, 5 )</text>
        <use href="#m" x="1111" y="407"/><text x="1110" y="391">( 3, 6 )</text>
        <use href="#m" x="1162" y="330"/><text x="1160" y="314">( 3, 7 )</text>
        <use href="#m" x="771" y="624"/><text x="770" y="608">( 4, 1 )</text>
        <use href="#m" x="865" y="630"/><text x="864" y="614">( 4, 2 )</text>
        <use href="#r" x="916" y="554"/><text x="914" y="538">( 4, 3 )</text>
        <use href="#r" x="1010" y="559"/><text x="1008" y="543">( 4, 4 )</text>
        <use href="#r" x="1061" y="483"/><text x="1059" y="467">( 4, 5 )</text>
        <use href="#m" x="1154" y="488"/><text x="1153" y="472">( 4, 6 )</text>
        <use href="#m" x="1205" y="412"/><text x="1203" y="396">( 4, 7 )</text>
        <use href="#m" x="814" y="706"/><text x="812" y="690">( 5, 1 )</text>
        <use href="#m" x="908" y="712"/><text x="906" y="696">( 5, 2 )</text>
        <use href="#r" x="959" y="636"/><text x="957" y="620">( 5, 3 )</text>
        <use href="#r" x="1052" y="642"/><text x="1050" y="626">( 5, 4 )</text>
        <use href="#r" x="1103" y="565"/><text x="1101" y="549">( 5, 5 )</text>
        <use href="#m" x="1197" y="571"/><text x="1195" y="555">( 5, 6 )</text>
        <use href="#m" x="1248" y="495"/><text x="1246" y="479">( 5, 7 )</text>
        <use href="#m" x="857" y="789"/><text x="855" y="773">( 6, 1 )</text>
        <use href="#m" x="950" y="795"/><text x="948" y="779">( 6, 2 )</text>
        <use href="#m" x="1001" y="718"/><text x="999" y="702">( 6, 3 )</text>
        <use href="#m" x="1095" y="724"/><text x="1093" y="708">( 6, 4 )</text>
        <use href="#m" x="1145" y="648"/><text x="1143" y="632">( 6, 5 )</text>
        <use href="#m" x="1239" y="654"/><text x="1237" y="638">( 6, 6 )</text>
        <use href="#m" x="1291" y="577"/><text x="1289" y="561">( 6, 7 )</text>
        <use href="#m" x="899" y="871"/><text x="897" y="855">( 7, 1 )</text>
        <use href="#m" x="993" y="877"/><text x="991" y="861">( 7, 2 )</text>
        <use href="#m" x="1044" y="801"/><text x="1042" y="785">( 7, 3 )</text>
        <use href="#m" x="1138" y="806"/><text x="1136" y="790">( 7, 4 )</text>
        <use href="#m" x="1189" y="730"/><text x="1187" y="714">( 7, 5 )</text>
        <use href="#m" x="1281" y="735"/><text x="1281" y="719">( 7, 6 )</text>
        <use href="#m" x="1333" y="659"/><text x="1331" y="643">( 7, 7 )</text>
      </g>

      <g class="axes">
        <path class="ay" d="M402 964 442 948 440 944 451 943 444 952 443 950 404 968z"/>
        <path class="ax" d="M402 968 420 1000 417 1002 425 1014 424 997 422 999 405 967z"/>
        <rect class="az" x="400" y="953" width="7" height="9"/>
        <circle class="ao" cx="401" cy="966" r="7"/>
        <circle cx="402" cy="964" r="2.500" fill="#334"/>
        <text class="ty" x="453" y="944">Y</text><text class="tx" x="425" y="1027">X</text><text class="tz" x="400" y="957">Z</text>
      </g>
    </svg>
  </div>
</main>
</body>
</html>
```
FILE: styles.css
```css
*{box-sizing:border-box}
html,body{margin:0;padding:0;width:1920px;height:1040px;overflow:hidden}
body{font-family:"Noto Sans","Open Sans",sans-serif;font-size:11px;color:#333;background:#e3e3e3;display:flex;flex-direction:column}
.defs{position:absolute;width:0;height:0}
.ic{width:20px;height:18px;fill:none;stroke:#222;stroke-width:1.3;flex:none;display:block}

.menubar{height:26px;flex:none;background:#e4e4e4;border-bottom:1px solid #777;display:flex;align-items:center;position:relative}
.logo{width:24px;height:24px;flex:none;padding:1px 2px 1px 2px}
.logo svg{width:20px;height:22px;display:block}
.menu{display:flex;gap:11.300px;margin-left:7px;font-size:11.500px;color:#444;line-height:26px}
.win-tools{margin-left:auto;display:flex;align-items:center}
.wt{width:18px;height:18px;margin-right:8px}
.search{width:190px;height:21px;background:#f4f4f4;border:1px solid #cfcfcf;margin-left:2px;display:flex;align-items:center;color:#a0a0a0;font-size:11.600px;padding-left:7px;gap:5px}
.s-ic{width:12px;height:14px;stroke:#888}
.wbtns{display:flex;align-items:center;width:99px;padding-left:15px}
.wmin{width:13px;height:3px;background:#222;margin-top:8px}
.wres{width:16px;height:16px;margin-left:17px}
.wclose{font-family:"Liberation Sans",sans-serif;font-weight:700;font-size:13px;color:#222;margin-left:18px}

.tabbar{height:20px;flex:none;background:#aeaeae;display:flex}
.tab-add{width:20px;background:#999;color:#222;font-size:20px;line-height:19px;text-align:center}
.tab{width:169px;background:#666;display:flex;align-items:center;padding-left:6px;color:#f4f4f4;font-size:12px}
.tab-ic{width:16px;height:16px;flex:none}
.tab-t{margin-left:5px}
.tab-x{margin-left:auto;margin-right:6px;font-size:11px}
.strip{height:6px;flex:none;background:#666}

.ribbon{height:93px;flex:none;background:#f0f0f0;border-bottom:1px solid #777;display:flex}
.sec{height:92px;flex:none;border-right:1px solid #bdbdbd;display:flex;flex-direction:column}
.s-nav{width:120px}.s-sys{width:79px}.s-sk{width:121px}.s-body{width:481px}.s-wire{width:121px}.s-arr{width:121px}.s-aux{width:53px}.s-dim{width:53px}.s-ann{width:80px}.s-diag{width:120px}.s-drw{width:121px}
.g3{height:75px;display:grid;grid-template-rows:repeat(3,25px);grid-auto-flow:column}
.one{grid-template-columns:1fr}
.s-sk .g3{padding-left:4px}
.s-sk .rb{gap:4px}
.s-wire .g3{padding-left:4px}
.s-wire .rb{gap:4px}
.s-diag .g3{padding-left:3px}
.s-drw .g3{padding-left:5px}
.s-arr .g3{padding-left:0}
.s-arr .rb{padding-left:5px}
.s-arr .rb.act span{letter-spacing:.15px}
.s-nav .rb{padding-left:4px}
.s-nav .rb .ic{margin-right:1px}
.body4{grid-template-columns:120px 120px 120px 1fr;padding-left:5px}
.rb{display:flex;align-items:center;gap:2px;color:#333;font-size:11px;line-height:11px;position:relative;white-space:nowrap;min-width:0}
.rb>span,.rb>.ic,.icons>*{margin-top:-2px}
.rb.act{background:#444;color:#fff}
.cr::after{content:"";position:absolute;left:15px;top:16px;border:0 solid transparent;border-width:0 0 5px 5px;border-bottom-color:#111}
.crw::after{border-bottom-color:#fff;left:19px}
.icons{grid-auto-flow:row;align-items:center;justify-items:center}
.c3{grid-template-columns:repeat(3,26px);padding-left:3px}
.c2{grid-template-columns:repeat(2,27px);padding-left:1px}
.c2b{grid-template-columns:repeat(2,26px);padding-left:1px}
.c3b{grid-template-columns:repeat(3,25.500px);padding-left:1px}
.ib{position:relative;display:block}
.ib.cr::after{left:15px;top:13px}
.foot{height:17px;background:#e4e4e4;display:flex;align-items:center;justify-content:center;position:relative;font-size:10px;color:#444;padding:0 9px 0 2px}
.foot.center{padding:0}
.foot.withdn{padding-right:22px}
.foot b{font-weight:400;white-space:nowrap}
.chev{transform:rotate(90deg);font-size:13px;line-height:12px;color:#555}
.grip{position:absolute;right:3px;top:3px;width:4px;height:10px;background:radial-gradient(circle,#888 0.7px,transparent 1px) 0 0/2px 2.500px}
.dn{display:inline-block;width:0;height:0;border:4px solid transparent;border-top:5px solid #222;border-bottom:0}
.foot .dn{position:absolute;right:13px;top:6px}
.s-wire .foot{justify-content:flex-start;padding-left:5px}
.s-arr .foot{justify-content:flex-start;padding-left:5px}
.s-aux .foot,.s-dim .foot,.s-ann .foot{justify-content:flex-start;padding-left:4px}

.workspace{flex:1;display:flex;min-height:0}
.rail{width:27px;flex:none;background:#c8c8c8;border-right:1px solid #555;display:flex;flex-direction:column}
.rail-i{height:25px;background:#f0f0f0;display:flex;align-items:center;justify-content:center}
.rail-i .ic{margin-top:-2px}
.rail-i.on{background:#444}
.fx{font-family:"Liberation Serif",serif;font-size:20px;color:#222;line-height:21px}
.fxx{font-size:15px;margin-top:7px}

.panel{width:299px;flex:none;background:#f0f0f0;display:flex;flex-direction:column;position:relative}
.p-head{height:17px;background:#c8c8c8;border-bottom:1px solid #666;display:flex;align-items:center;justify-content:space-between;padding:0 3px 2px;font-size:11px;color:#333;flex:none}
.p-gear{width:14px;height:14px}
.p-title{height:57px;border-bottom:2px solid #444;flex:none;display:flex;justify-content:space-between;padding:0 2px 0 3px}
.p-name{font-size:10px;color:#444;line-height:14px;margin-top:4px}
.p-tools{width:52px;height:52px;display:grid;grid-template-columns:26px 26px;grid-template-rows:24px 24px;row-gap:4px;justify-items:center;align-items:center}
.help{width:16px;height:16px;border-radius:50%;background:#1c1c1c;color:#fff;font:700 13px/16px "Liberation Sans",sans-serif;text-align:center}
.p-body{flex:1;min-height:0;overflow:hidden;padding-top:5px;position:relative}
.p-line{position:absolute;right:0;top:0;width:1px;height:658px;background:#555}
.bodies{height:113px;margin:0 1px;border:1px dashed #19d2e8;display:grid;grid-template-columns:108px 159px;column-gap:3px;padding-top:1px;align-items:start}
.bodies-l{text-align:right;line-height:12px}
.lnk{color:#2277cc;text-decoration:underline;text-decoration-skip-ink:none}
.area{background:#fff;border:1px solid #aaa;height:102px;padding:3px 2px;margin-top:4px;font-size:11px;color:#222}
.sect-h{height:25px;margin-top:17px;background:#c8c8c8;display:flex;align-items:center;padding:0 0 2px 98px;font-size:11.300px;color:#333}
.s2{margin-top:21px}
.s3{margin-top:21px}
.up{width:7px;height:7px;border:solid #333;border-width:1.500px 0 0 1.500px;transform:rotate(45deg);display:block;margin:3px 5px 0 3px}
.grp-h{height:22px;margin:14px 0 3px;display:flex;align-items:center;padding:0 0 4px 98px;font-size:11.300px;color:#222;font-weight:500}
.g2{margin-top:16px}
.base-h{height:22px;margin:14px 0 3px;display:flex;align-items:center;padding:0 0 4px 112px;font-size:11px;color:#333;font-weight:500}
.fr{display:grid;grid-template-columns:109px 159px 28px;column-gap:3px;height:23px;margin-bottom:5px;align-items:center}
.fr .lab{text-align:right;line-height:12px;font-size:11px;color:#555;white-space:nowrap;display:block;margin-top:-2px}
.fr a.lab{color:#2277cc}
.lab em{font-style:normal;color:#888}
.lab em.narrow{letter-spacing:-.15px}
.lab-dn{margin:0 4px 2px 2px;vertical-align:middle;border-width:5px 5px 0}
.inp{height:23px;background:#fff;border:1px solid #aaa;padding:0 5px;line-height:21px;font-size:11px;color:#222;position:relative}
.it{font-style:italic;padding-left:2px;font-size:12px}
.sel .dn{position:absolute;right:6px;top:8px;border-width:5px 5px 0}
.fr-a{width:18px;height:18px;margin-left:3px;margin-top:-1px}
.hl{height:28px;margin:-2px 0 2px;background:#8fdcea;padding:2px 0}
.hl .inp{height:24px}
.hl .lab{color:#444}
.tgl{display:flex;height:24px}
.t{width:24px;height:24px;display:flex;align-items:center;justify-content:center}
.t .ic{width:18px;height:18px}
.t.on{background:#444}
.t.on .ic{stroke:#fff}
.sc{width:130px;gap:2px;margin-left:0}
.sc .t{width:24px}
.fr-sc{margin:4px 0 0;height:24px}
.fr-sc .lab{margin-top:-5px}
.fr-list{height:72px;align-items:start;margin:7px 0 0}
.fr-list .lab{margin-top:-5px}
.list{height:80px;background:#fff;border:1px solid #aaa;padding:0 2px;font-size:11px;line-height:22.600px;color:#333;position:relative;border-bottom:0}
.thumb{position:absolute;right:0;top:0;width:2px;height:10px;background:#333}
.status{height:22px;flex:none;border-top:1px solid #555;display:flex;align-items:center;background:#f0f0f0;font-size:11.200px;color:#444;padding:0 0 2px 4px;position:relative;margin-top:-1px;z-index:1}
.st-ic{width:15px;height:14px;margin-right:3px}
.st-x{margin-left:auto;margin-right:5px;color:#555;font-size:11px}

.canvas{flex:1;position:relative;background:linear-gradient(180deg,#dddddd 0%,#c9c9ce 45%,#adadb5 100%);min-width:0;overflow:hidden}
.scene{display:block;width:1593px;height:895px}
.floatbar{position:absolute;left:340px;top:0;height:26px;display:flex;background:#f0f0f0;border:1px solid #777;z-index:2;width:558px}
.seg{display:flex;align-items:center;border-left:1px solid #777;height:100%;padding:0 1px}
.seg:first-child{border-left:0}
.seg.dk{background:#444;margin-left:1px;border-left:0}
.seg.noline{border-left:0}
.seg.end{margin-left:2px;flex:1}
.ti{width:24.500px;display:flex;justify-content:center;align-items:center;margin-top:-2px}
.ti .ic{width:17px;height:18px}
.grip-s{width:15px}
.dots{width:10px;height:6px;margin:-12px 0 0 1px;background:radial-gradient(circle,#555 0.7px,transparent 1px) 0 0/2.500px 2.500px}
.s28{width:28px}
.s48{width:48px}
.dn.w{border-top-color:#fff}

.hex use{fill:url(#pk);stroke:#3a3a3a;stroke-width:2}
.hex use:nth-child(even){fill:none;stroke:#555;stroke-width:1.200}
.hside{fill:#c8c8c8;stroke:#555;stroke-width:1}
.red use{fill:url(#rd);stroke:#c00000;stroke-width:3}
.red use:nth-child(even){fill:url(#rd);stroke:#8a0b0b;stroke-width:1}
.sk path{fill:none;stroke:#111;stroke-width:1}
.sk .thin{stroke:#444;stroke-width:.8}
.sk .a{fill:#111}
.dim text{font:400 16px "Noto Sans",sans-serif;fill:#444;fill-opacity:.25;stroke:#333;stroke-width:.45}
.dim .rd{stroke:#f04040;stroke-width:.7;fill:none;font-size:18px}
.cy{fill:none;stroke:#19d8e4;stroke-width:1;stroke-dasharray:3 1}
.handle rect,.handle path{fill:none;stroke:#0e9af4;stroke-width:2.400}
.pts text{font:700 12px "Liberation Sans",sans-serif;letter-spacing:.7px;fill:#0a30f0;text-anchor:middle}
.ay{fill:#64cf70;stroke:#4ca85a;stroke-width:.5}
.ax{fill:#e07078;stroke:#c04a50;stroke-width:.5}
.az{fill:#4a78e0}
.ao{fill:#dcd860}
.axes text{font:400 12px "Liberation Sans",sans-serif}
.ty{fill:#5ac46c}.tx{fill:#e0404a}.tz{fill:#3a70e0}
```
